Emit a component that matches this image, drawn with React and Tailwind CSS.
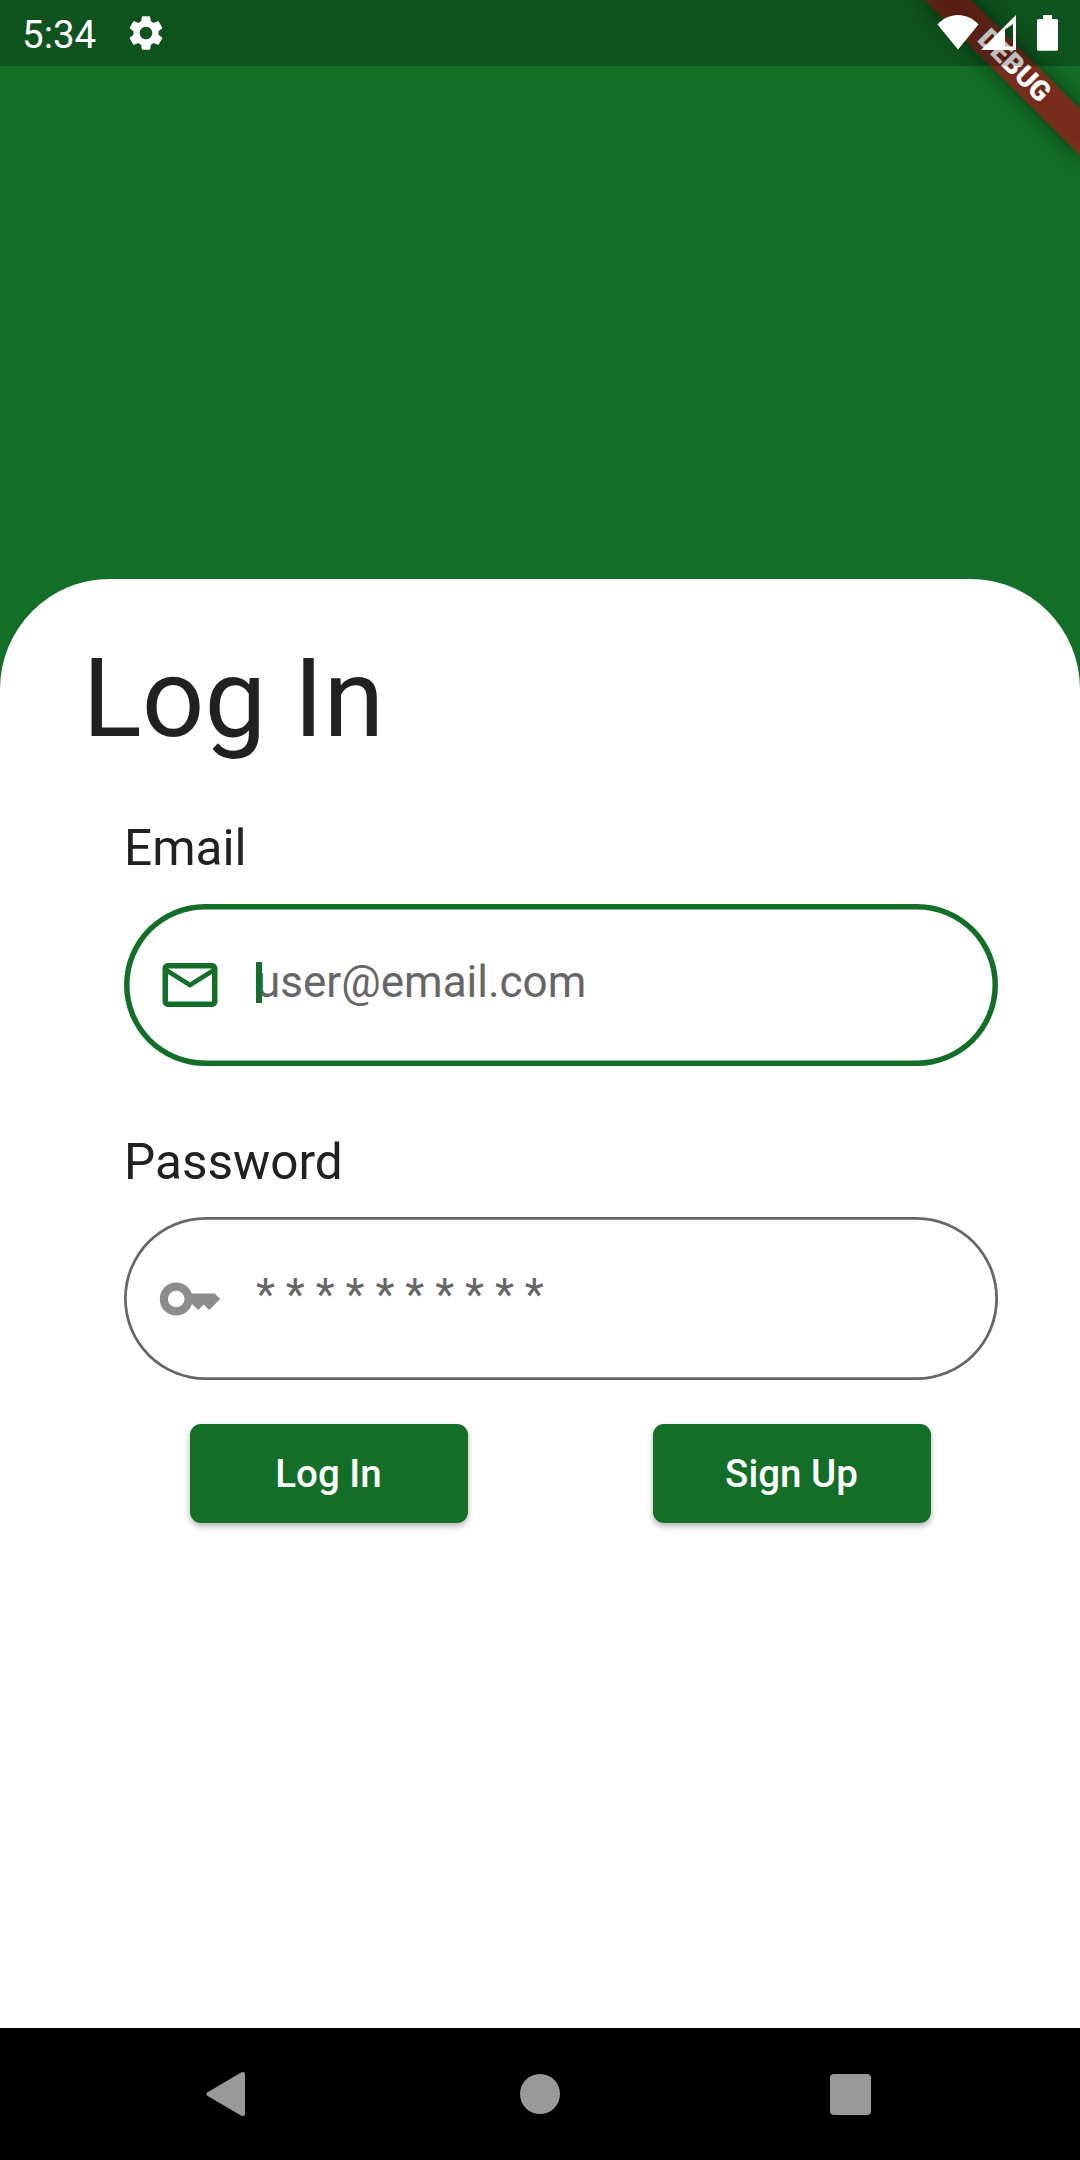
import React from "react";

function DebugBanner() {
  return (
    <div className="absolute left-[1080px] top-0 h-0 w-0 origin-top-left rotate-45">
      <div className="absolute left-[-110px] top-[77px] h-[33px] w-[220px] bg-black/50 blur-[10.9px]" />
      <div className="absolute left-[-110px] top-[77px] flex h-[33px] w-[220px] items-center justify-center bg-[#b71c1ca0] text-[28.05px] leading-none font-black text-white">
        DEBUG
      </div>
    </div>
  );
}

function StatusBar() {
  return (
    <header className="absolute inset-x-0 top-0 flex h-[66px] items-center justify-between bg-black/25 pl-[22px] pr-[22px] text-white">
      <div className="flex items-center">
        <span className="w-[78px] pt-[3px] text-[38.5px] leading-[46px] whitespace-nowrap">5:34</span>
        <svg className="ml-[25px] h-[42px] w-[42px]" viewBox="0 0 24 24" fill="currentColor">
          <path d="M19.14 12.94c.04-.3.06-.61.06-.94 0-.32-.02-.64-.07-.94l2.03-1.58c.18-.14.23-.41.12-.61l-1.92-3.32c-.12-.22-.37-.29-.59-.22l-2.39.96c-.5-.38-1.03-.7-1.62-.94l-.36-2.54c-.04-.24-.24-.41-.48-.41h-3.84c-.24 0-.43.17-.47.41l-.36 2.54c-.59.24-1.13.57-1.62.94l-2.39-.96c-.22-.08-.47 0-.59.22L2.74 8.87c-.12.21-.08.47.12.61l2.03 1.58c-.05.3-.09.63-.09.94s.02.64.07.94l-2.03 1.58c-.18.14-.23.41-.12.61l1.92 3.32c.12.22.37.29.59.22l2.39-.96c.5.38 1.03.7 1.62.94l.36 2.54c.05.24.24.41.48.41h3.84c.24 0 .44-.17.47-.41l.36-2.54c.59-.24 1.13-.56 1.62-.94l2.39.96c.22.08.47 0 .59-.22l1.92-3.32c.12-.22.07-.47-.12-.61l-2.01-1.58zM12 15.6c-1.98 0-3.6-1.62-3.6-3.6s1.62-3.6 3.6-3.6 3.6 1.62 3.6 3.6-1.62 3.6-3.6 3.6z" />
        </svg>
      </div>
      <div className="flex items-center">
        <svg className="h-[36px] w-[42px]" viewBox="0 0 42 36" fill="currentColor">
          <path d="M21 34.5L.5 9.5C6 3.5 13 0 21 0s15 3.5 20.5 9.5z" />
        </svg>
        <svg className="ml-[2px] h-[36px] w-[36px]" viewBox="0 0 36 36" fill="currentColor" fillRule="evenodd">
          <path d="M0 35L35 0V35zM24 14.5V31.5H32V9z" />
        </svg>
        <svg className="ml-[20px] h-[36px] w-[21px]" viewBox="0 0 21 36" fill="currentColor">
          <path d="M6 0H15V4H19.5Q21 4 21 5.5V34.2Q21 35.7 19.5 35.7H1.5Q0 35.7 0 34.2V5.5Q0 4 1.5 4H6z" />
        </svg>
      </div>
    </header>
  );
}

function EmailIcon() {
  return (
    <svg className="h-[66px] w-[66px] shrink-0 text-[#136e27]" viewBox="0 0 24 24" fill="currentColor">
      <path d="M22 6c0-1.1-.9-2-2-2H4c-1.1 0-2 .9-2 2v12c0 1.1.9 2 2 2h16c1.1 0 2-.9 2-2V6zm-2 0l-8 5-8-5h16zm0 12H4V8l8 5 8-5v10z" />
    </svg>
  );
}

function KeyIcon() {
  return (
    <svg className="mt-px h-[66px] w-[66px] shrink-0 text-[#8c8c8c]" viewBox="0 0 24 24" fill="currentColor">
      <path d="M21 10h-8.35C11.83 7.67 9.61 6 7 6c-3.31 0-6 2.69-6 6s2.69 6 6 6c2.61 0 4.83-1.67 5.65-4H13l2 2 2-2 2 2 4-4.04L21 10zM7 15c-1.65 0-3-1.35-3-3s1.35-3 3-3 3 1.35 3 3-1.35 3-3 3z" />
    </svg>
  );
}

function NavBar() {
  return (
    <nav className="flex h-[132px] items-center justify-between bg-black pl-[206px] pr-[209px] text-[#999999]">
      <svg className="h-[46px] w-[40px]" viewBox="0 0 40 46" fill="currentColor">
        <path d="M35 1.6Q39 -.2 39 3.4V42.6Q39 46.2 35 44.4L1.6 25Q-.6 23.2 1.6 21.2z" />
      </svg>
      <div className="ml-[3px] h-[40px] w-[40px] rounded-full bg-[#999999]" />
      <div className="h-[41px] w-[41px] rounded-[4px] bg-[#999999]" />
    </nav>
  );
}

function ActionButton({ children }) {
  return (
    <button className="h-[99px] w-[278px] rounded-[11px] bg-[#136e27] pt-[2px] pr-px text-[38.5px] leading-none font-medium text-white shadow-[0_3px_6px_rgba(0,0,0,0.3)]">
      {children}
    </button>
  );
}

export default function App() {
  return (
    <div className="relative flex h-[2160px] w-[1080px] flex-col overflow-hidden bg-[#136e27] font-['Roboto',sans-serif] text-[#212121]">
      <main className="mt-[579px] flex flex-1 flex-col rounded-t-[110px] bg-white pt-[55px] pr-[82px] pl-[82.5px]">
        <h1 className="text-[110px] leading-[129px]">Log In</h1>
        <section className="mt-[56px] ml-[41.5px] flex w-[873.5px] flex-col">
          <label className="text-[49.5px] leading-[58px]">Email</label>
          <div className="mt-[27px] flex h-[162px] items-center rounded-full pl-[33px] shadow-[inset_0_0_0_5.5px_#136e27]">
            <EmailIcon />
            <div className="relative ml-[33px] pb-[7px] text-[44px] leading-[52px] text-[#666666]">
              user@email.com
              <span className="absolute top-[6px] left-0 h-[41px] w-[6px] bg-[#136e27]" />
            </div>
          </div>
          <label className="mt-[67px] text-[49.5px] leading-[58px]">Password</label>
          <div className="mt-[26px] flex h-[163px] items-center rounded-full pl-[33px] shadow-[inset_0_0_0_2.75px_#666666]">
            <KeyIcon />
            <div className="ml-[33px] pb-[8px] text-[44px] leading-[52px] text-[#666666]">* * * * * * * * * *</div>
          </div>
          <div className="mt-[44px] flex justify-between pr-[66.5px] pl-[66px]">
            <ActionButton>Log In</ActionButton>
            <ActionButton>Sign Up</ActionButton>
          </div>
        </section>
      </main>
      <NavBar />
      <DebugBanner />
      <StatusBar />
    </div>
  );
}
